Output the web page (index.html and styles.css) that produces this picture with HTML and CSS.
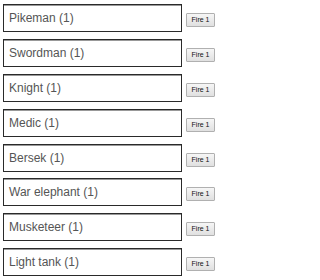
FILE: index.html
```html
<!DOCTYPE html>
<html>
<head>
<meta charset="utf-8">
<link rel="stylesheet" href="styles.css">
</head>
<body>
<div class="list">
  <div class="row"><div class="unit">Pikeman (1)</div><button class="fire">Fire 1</button></div>
  <div class="row"><div class="unit">Swordman (1)</div><button class="fire">Fire 1</button></div>
  <div class="row"><div class="unit">Knight (1)</div><button class="fire">Fire 1</button></div>
  <div class="row"><div class="unit">Medic (1)</div><button class="fire">Fire 1</button></div>
  <div class="row"><div class="unit">Bersek (1)</div><button class="fire">Fire 1</button></div>
  <div class="row"><div class="unit">War elephant (1)</div><button class="fire">Fire 1</button></div>
  <div class="row"><div class="unit">Musketeer (1)</div><button class="fire">Fire 1</button></div>
  <div class="row"><div class="unit">Light tank (1)</div><button class="fire">Fire 1</button></div>
</div>
</body>
</html>
```
FILE: styles.css
```css
html, body {
  margin: 0;
  padding: 0;
  background: #fff;
}
.list {
  display: flex;
  flex-direction: column;
  gap: 6.9px;
  padding: 4px 0 0 3px;
}
.row {
  display: flex;
  align-items: baseline;
}
.unit {
  box-sizing: border-box;
  width: 179px;
  height: 28px;
  border: 1px solid #2a2a2a;
  box-shadow: inset 0 1px 0 #999;
  padding: 0 0 0 5px;
  line-height: 26px;
  font-family: "Liberation Sans", Arial, sans-serif;
  font-size: 12px;
  color: #555;
}
.fire {
  box-sizing: border-box;
  margin-left: 4px;
  height: 14px;
  width: 29px;
  padding: 0;
  border: 1px solid #b0b0b0;
  border-radius: 1px;
  background: linear-gradient(#f6f6f6, #e0e0e0);
  font-family: "Liberation Sans", Arial, sans-serif;
  font-size: 7px;
  color: #111;
  line-height: 12px;
}
```
